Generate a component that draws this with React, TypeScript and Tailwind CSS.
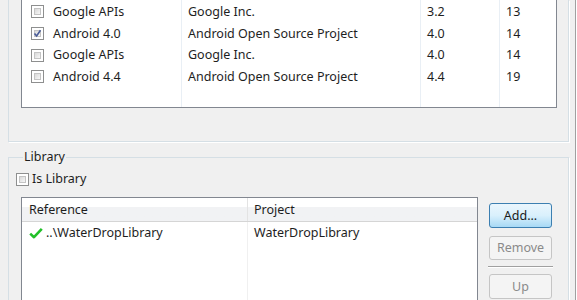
import React from 'react';

const font = { fontFamily: '"Noto Sans", "Noto Sans CJK SC", sans-serif' };

function Check({ checked = false }: { checked?: boolean }) {
  return (
    <div className="w-[13px] h-[13px] border border-[#8e8f8f] bg-white p-[2px] shrink-0">
      <div className="w-full h-full bg-gradient-to-br from-[#d9d9d9] to-[#f7f7f7] border border-[#c4c4c4] flex items-center justify-center">
        {checked && (
          <svg width="9" height="9" viewBox="0 0 9 9" className="-m-[2px]">
            <path d="M1.5 4.5 L3.6 7 L7.5 1.2" fill="none" stroke="#4a5c98" strokeWidth="1.6" />
          </svg>
        )}
      </div>
    </div>
  );
}

const platforms = [
  { name: 'Google APIs', vendor: 'Google Inc.', platform: '3.2', api: '13', checked: false },
  { name: 'Android 4.0', vendor: 'Android Open Source Project', platform: '4.0', api: '14', checked: true },
  { name: 'Google APIs', vendor: 'Google Inc.', platform: '4.0', api: '14', checked: false },
  { name: 'Android 4.4', vendor: 'Android Open Source Project', platform: '4.4', api: '19', checked: false },
];

function Button({ label, enabled = false, h = 'h-[24px]' }: { label: string; enabled?: boolean; h?: string }) {
  return (
    <div
      className={
        enabled
          ? `w-[63px] ${h} rounded-[3px] border border-[#3c7fb1] bg-gradient-to-b from-[#eaf6fd] via-[#d9f0fc] to-[#a7d9f5] flex items-center justify-center text-[#1a1a1a]`
          : `w-[63px] ${h} rounded-[3px] border border-[#c5c5c5] bg-[#f4f4f4] flex items-center justify-center text-[#8a8a8a]`
      }
    >
      {label}
    </div>
  );
}

export default function App() {
  return (
    <div className="w-[577px] h-[300px] overflow-hidden bg-[#f0f0f0] flex text-[12.5px] leading-[16px] text-[#1e1e1e]" style={font}>
      <div className="w-[575px] shrink-0">
        {/* Target platform group (scrolled, top cut off) */}
        <div className="ml-[8px] w-[561px] h-[142px] border-x border-b border-[#d5dfe5] shadow-[1px_1px_0_#ffffff] pl-[12px]">
          <div className="w-[536px] h-[108px] bg-white border-x border-b border-[#828790] flex">
            <div className="w-[160px] border-r border-[#e9eff5] pl-[9px]">
              {platforms.map((p, i) => (
                <div key={i} className="h-[21.7px] flex items-center gap-[9px] first:mt-[1px]">
                  <Check checked={p.checked} />
                  <span>{p.name}</span>
                </div>
              ))}
            </div>
            <div className="w-[239px] border-r border-[#e9eff5] pl-[6px]">
              {platforms.map((p, i) => (
                <div key={i} className="h-[21.7px] flex items-center first:mt-[1px]">{p.vendor}</div>
              ))}
            </div>
            <div className="w-[79px] border-r border-[#e9eff5] pl-[6px]">
              {platforms.map((p, i) => (
                <div key={i} className="h-[21.7px] flex items-center first:mt-[1px]">{p.platform}</div>
              ))}
            </div>
            <div className="flex-1 pl-[6px]">
              {platforms.map((p, i) => (
                <div key={i} className="h-[21.7px] flex items-center first:mt-[1px]">{p.api}</div>
              ))}
            </div>
          </div>
        </div>

        {/* Library group */}
        <fieldset className="mt-[7px] ml-[8px] w-[561px] h-[200px] border border-[#d5dfe5] shadow-[1px_1px_0_#ffffff] pl-[7px]">
          <legend className="ml-[7px] px-[1px] leading-[16px]">Library</legend>
          <div className="flex items-center gap-[3px] mt-[6px]">
            <Check />
            <span>Is Library</span>
          </div>
          <div className="flex mt-[10px] pl-[5px]">
            <div className="w-[457px] h-[120px] bg-white border border-[#828790] flex flex-col">
              <div className="h-[24px] flex border-b border-[#d5d5d5] bg-gradient-to-b from-white from-40% to-[#f1f2f4] to-40%">
                <div className="w-[226px] border-r border-[#e3e3e3] pl-[7px] flex items-center">Reference</div>
                <div className="flex-1 pl-[6px] flex items-center">Project</div>
              </div>
              <div className="flex flex-1">
                <div className="w-[226px] border-r border-[#f0f0f0] pl-[7px]">
                  <div className="h-[22px] flex items-center gap-[3px]">
                    <svg width="14" height="12" viewBox="0 0 14 12">
                      <path d="M1.2 6.6 L5 10.2 L12.8 1.8" fill="none" stroke="#22c02a" strokeWidth="2.6" strokeLinejoin="round" />
                    </svg>
                    <span>..\WaterDropLibrary</span>
                  </div>
                </div>
                <div className="flex-1 pl-[6px]">
                  <div className="h-[22px] flex items-center">WaterDropLibrary</div>
                </div>
              </div>
            </div>
            <div className="ml-[11px] flex flex-col mt-[6px]">
              <Button label="Add..." enabled h="h-[25px]" />
              <div className="mt-[8px]"><Button label="Remove" /></div>
              <div className="my-[6px] -mx-[1px] h-[2px] border-t border-[#a0a0a0] border-b border-b-white" />
              <Button label="Up" h="h-[25px]" />
            </div>
          </div>
        </fieldset>
      </div>
      <div className="w-[1px] h-full bg-[#a0a0a0]" />
      <div className="w-[1px] h-full bg-white" />
    </div>
  );
}
